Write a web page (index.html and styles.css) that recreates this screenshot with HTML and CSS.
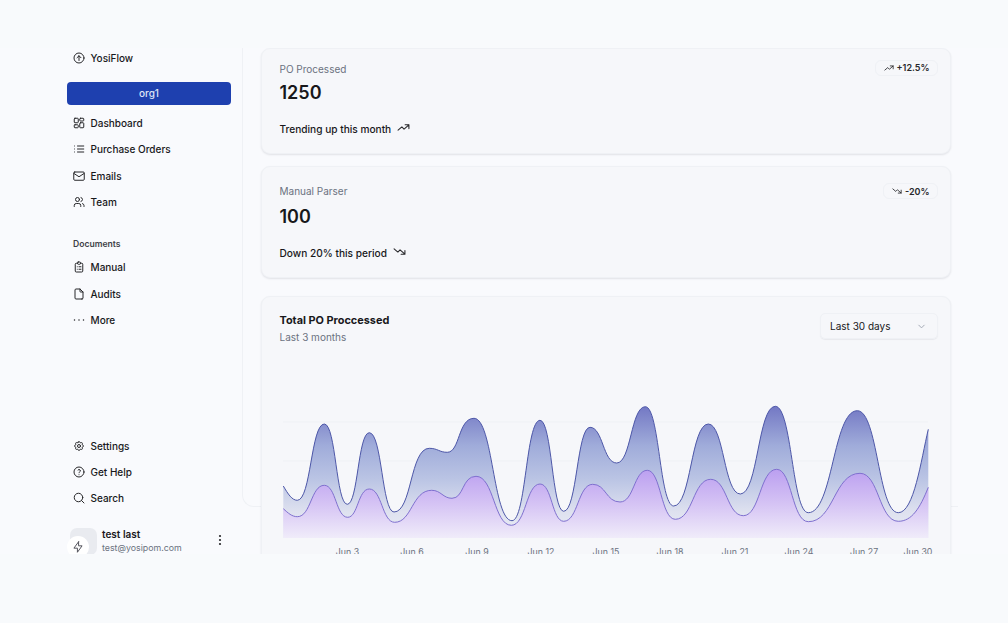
FILE: index.html
```html
<!DOCTYPE html>
<html lang="en">
<head>
<meta charset="utf-8">
<title>YosiFlow</title>
<link rel="stylesheet" href="styles.css">
</head>
<body>
<div class="shell">
  <aside class="sidebar">
    <div class="brand">
      <svg class="icon" viewBox="0 0 24 24"><circle cx="12" cy="12" r="10"/><path d="M12 17V7.5M8 11.5l4-4 4 4"/></svg>
      <span>YosiFlow</span>
    </div>
    <button class="org">org1</button>
    <nav class="nav nav-main">
      <a class="item"><svg class="icon" viewBox="0 0 24 24"><rect x="2.5" y="2.5" width="8" height="9" rx="1.5"/><rect x="13.5" y="2.5" width="8" height="5.5" rx="1.5"/><rect x="2.5" y="15.5" width="8" height="6" rx="1.5"/><rect x="13.5" y="11.5" width="8" height="10" rx="1.5"/></svg><span>Dashboard</span></a>
      <a class="item"><svg class="icon" viewBox="0 0 24 24"><path d="M9 6h12.5M9 12h12.5M9 18h12.5M3 6v.01M3 12v.01M3 18v.01"/></svg><span>Purchase Orders</span></a>
      <a class="item"><svg class="icon" viewBox="0 0 24 24"><rect x="1.5" y="4" width="21" height="16.5" rx="2"/><path d="M2 7l10 6.5L22 7"/></svg><span>Emails</span></a>
      <a class="item"><svg class="icon" viewBox="0 0 24 24"><circle cx="9" cy="7" r="4"/><path d="M2.5 21v-2a4 4 0 0 1 4-4h5a4 4 0 0 1 4 4v2M16 3.13a4 4 0 0 1 0 7.75M22 21v-2a4 4 0 0 0-3-3.85"/></svg><span>Team</span></a>
    </nav>
    <div class="group-label">Documents</div>
    <nav class="nav">
      <a class="item"><svg class="icon" viewBox="0 0 24 24"><path d="M9 4.500H6.500a2 2 0 0 0-2 2V20a2 2 0 0 0 2 2h11a2 2 0 0 0 2-2V6.500a2 2 0 0 0-2-2H15"/><rect x="9" y="2" width="6" height="4.500" rx="1.500"/><path d="M8.500 11.500h.01M12 11.500h4M8.500 16.500h.01M12 16.500h4"/></svg><span>Manual</span></a>
      <a class="item"><svg class="icon" viewBox="0 0 24 24"><path d="M14 2v5a1 1 0 0 0 1 1h5"/><path d="M18 22H6a2 2 0 0 1-2-2V4a2 2 0 0 1 2-2h8l6 6v12a2 2 0 0 1-2 2z"/></svg><span>Audits</span></a>
      <a class="item"><svg class="icon icon-bold" viewBox="0 0 24 24"><path d="M3 12h.01M12 12h.01M21 12h.01"/></svg><span>More</span></a>
    </nav>
    <nav class="nav nav-bottom">
      <a class="item"><svg class="icon" viewBox="0 0 24 24"><path d="M10.325 4.317c.426-1.756 2.924-1.756 3.35 0a1.724 1.724 0 0 0 2.573 1.066c1.543-.94 3.31.826 2.37 2.37a1.724 1.724 0 0 0 1.065 2.572c1.756.426 1.756 2.924 0 3.35a1.724 1.724 0 0 0-1.066 2.573c.94 1.543-.826 3.31-2.37 2.37a1.724 1.724 0 0 0-2.572 1.065c-.426 1.756-2.924 1.756-3.35 0a1.724 1.724 0 0 0-2.573-1.066c-1.543.94-3.31-.826-2.37-2.37a1.724 1.724 0 0 0-1.065-2.572c-1.756-.426-1.756-2.924 0-3.35a1.724 1.724 0 0 0 1.066-2.573c-.94-1.543.826-3.31 2.37-2.37 1 .608 2.296.07 2.572-1.065z"/><circle cx="12" cy="12" r="3"/></svg><span>Settings</span></a>
      <a class="item"><svg class="icon" viewBox="0 0 24 24"><circle cx="12" cy="12" r="10"/><path d="M12 17.500v.01M12 13.500a1.500 1.500 0 0 1 1-1.500 2.600 2.600 0 1 0-3-4"/></svg><span>Get Help</span></a>
      <a class="item"><svg class="icon" viewBox="0 0 24 24"><circle cx="11" cy="11" r="8.500"/><path d="M22 22l-5-5"/></svg><span>Search</span></a>
    </nav>
    <div class="user">
      <div class="avatar"></div>
      <div class="bolt"><svg viewBox="0 0 24 24"><path d="M13 3v7h6l-8 11v-7H5l8-11"/></svg></div>
      <div class="user-text">
        <div class="user-name">test last</div>
        <div class="user-mail">test@yosipom.com</div>
      </div>
      <svg class="kebab" viewBox="0 0 4 12"><circle cx="2" cy="2" r="1.100"/><circle cx="2" cy="6" r="1.100"/><circle cx="2" cy="10" r="1.100"/></svg>
    </div>
  </aside>
  <main class="main">
    <div class="panel">
      <section class="card card-stat card-first">
        <div class="stat-head">
          <div>
            <div class="stat-label">PO Processed</div>
            <div class="stat-value">1250</div>
          </div>
          <div class="badge"><svg class="mini" viewBox="0 0 24 24"><path d="M2 17l7-6 4 4 9-8M15 7h7v7"/></svg>+12.5%</div>
        </div>
        <div class="stat-foot">Trending up this month <svg class="foot-icon" viewBox="0 0 24 24"><path d="M2 17l7-6 4 4 9-8M15 7h7v7"/></svg></div>
      </section>
      <section class="card card-stat card-second">
        <div class="stat-head">
          <div>
            <div class="stat-label">Manual Parser</div>
            <div class="stat-value">100</div>
          </div>
          <div class="badge"><svg class="mini" viewBox="0 0 24 24"><path d="M2 7l7 6 4-4 9 8M22 10v7h-7"/></svg>-20%</div>
        </div>
        <div class="stat-foot">Down 20% this period <svg class="foot-icon" viewBox="0 0 24 24"><path d="M2 7l7 6 4-4 9 8M22 10v7h-7"/></svg></div>
      </section>
      <section class="card card-chart">
        <div class="chart-head">
          <div>
            <div class="chart-title">Total PO Proccessed</div>
            <div class="chart-sub">Last 3 months</div>
          </div>
          <div class="select">
            <span>Last 30 days</span>
            <svg class="chev" viewBox="0 0 24 24"><path d="M6 9l6 6 6-6"/></svg>
          </div>
        </div>
        <svg class="chart" viewBox="262 348 688 212" width="688" height="212">
          <defs>
            <linearGradient id="fillUpper" x1="0" y1="0" x2="0" y2="1">
              <stop offset="0" stop-color="#7378c4"/>
              <stop offset="0.3" stop-color="#a0acda"/>
              <stop offset="0.55" stop-color="#bac4e4"/>
              <stop offset="0.8" stop-color="#dee1ef"/>
              <stop offset="1" stop-color="#eceef7"/>
            </linearGradient>
            <linearGradient id="fillLower" x1="0" y1="0" x2="0" y2="1">
              <stop offset="0" stop-color="#bb9ff0"/>
              <stop offset="0.5" stop-color="#d5c3f4"/>
              <stop offset="1" stop-color="#f0ecfa"/>
            </linearGradient>
          </defs>
          <path class="grid" d="M283 422H928M283 461H928"/>
          <path class="area-upper" d="M283.3 486C288 494 292 500.3 297.3 500.3C311 500.3 311 424 324.3 424C336 424 336 504.3 347.3 504.3C358 504.3 358 432.7 369.3 432.7C382 432.7 382 512 394 512C412 512 410 448.3 429.3 448.3C438 448.3 439 452.3 447.3 452.3C460 452.3 458 418.3 474 418.3C493 418.3 493 520.7 512 520.7C526 520.7 526 420.3 540 420.3C552 420.3 552 511.3 563.7 511.3C577 511.3 577 427.3 590 427.3C603 427.3 603 463 616.7 463C631 463 631 406.7 645.3 406.7C659.5 406.7 659.5 506 673.7 506C691 506 691 424 708.3 424C724 424 724 494 740.3 494C758 494 758 406.3 775.3 406.3C792 406.3 792 512.7 808.3 512.7C833 512.7 833 410.7 857.3 410.7C878 410.7 878 512.7 898.3 512.7C914 512.7 921 460 928.3 429.3V538H283.3Z"/>
          <path class="area-lower" d="M283.3 508.7C288 513 292 516.7 297.3 516.7C311 516.7 311 485.3 324.3 485.3C336 485.3 336 517.3 347.7 517.3C358 517.3 358 489 369.3 489C382 489 382 522.3 394.7 522.3C412 522.3 412 490.3 431.7 490.3C441 490.3 443 498.3 452 498.3C464 498.3 462 476.3 476 476.3C494 476.3 494 525.3 511.3 525.3C526 525.3 526 484 540 484C552 484 552 521.3 563.7 521.3C578 521.3 578 484.3 592.7 484.3C606 484.3 606 502 620 502C634 502 634 470.3 647.3 470.3C661 470.3 661 519.3 675.3 519.3C693 519.3 693 479.3 710.7 479.3C727 479.3 727 515.7 743.3 515.7C760 515.7 760 469.3 776.7 469.3C792 469.3 792 521.7 808.3 521.7C834 521.7 834 473.3 860 473.3C879 473.3 879 521.3 898.3 521.3C912 521.3 920 508 928.3 487.3V538H283.3Z"/>
          <path class="line-upper" d="M283.3 486C288 494 292 500.3 297.3 500.3C311 500.3 311 424 324.3 424C336 424 336 504.3 347.3 504.3C358 504.3 358 432.7 369.3 432.7C382 432.7 382 512 394 512C412 512 410 448.3 429.3 448.3C438 448.3 439 452.3 447.3 452.3C460 452.3 458 418.3 474 418.3C493 418.3 493 520.7 512 520.7C526 520.7 526 420.3 540 420.3C552 420.3 552 511.3 563.7 511.3C577 511.3 577 427.3 590 427.3C603 427.3 603 463 616.7 463C631 463 631 406.7 645.3 406.7C659.5 406.7 659.5 506 673.7 506C691 506 691 424 708.3 424C724 424 724 494 740.3 494C758 494 758 406.3 775.3 406.3C792 406.3 792 512.7 808.3 512.7C833 512.7 833 410.7 857.3 410.7C878 410.7 878 512.7 898.3 512.7C914 512.7 921 460 928.3 429.3"/>
          <path class="line-lower" d="M283.3 508.7C288 513 292 516.7 297.3 516.7C311 516.7 311 485.3 324.3 485.3C336 485.3 336 517.3 347.7 517.3C358 517.3 358 489 369.3 489C382 489 382 522.3 394.7 522.3C412 522.3 412 490.3 431.7 490.3C441 490.3 443 498.3 452 498.3C464 498.3 462 476.3 476 476.3C494 476.3 494 525.3 511.3 525.3C526 525.3 526 484 540 484C552 484 552 521.3 563.7 521.3C578 521.3 578 484.3 592.7 484.3C606 484.3 606 502 620 502C634 502 634 470.3 647.3 470.3C661 470.3 661 519.3 675.3 519.3C693 519.3 693 479.3 710.7 479.3C727 479.3 727 515.7 743.3 515.7C760 515.7 760 469.3 776.7 469.3C792 469.3 792 521.7 808.3 521.7C834 521.7 834 473.3 860 473.3C879 473.3 879 521.3 898.3 521.3C912 521.3 920 508 928.3 487.3"/>
          <g class="ticks">
            <text x="347.5" y="555">Jun 3</text>
            <text x="412" y="555">Jun 6</text>
            <text x="477" y="555">Jun 9</text>
            <text x="541" y="555">Jun 12</text>
            <text x="606" y="555">Jun 15</text>
            <text x="670" y="555">Jun 18</text>
            <text x="735" y="555">Jun 21</text>
            <text x="799" y="555">Jun 24</text>
            <text x="864" y="555">Jun 27</text>
            <text x="918" y="555">Jun 30</text>
          </g>
        </svg>
      </section>
    </div>
  </main>
</div>
</body>
</html>
```

FILE: styles.css
```css
* { box-sizing: border-box; }

html, body { margin: 0; height: 100%; }

body {
  background: #f8fafc;
  padding-top: 48px;
  font-family: Inter, "Liberation Sans", sans-serif;
  font-size: 10px;
  color: #18181b;
  overflow: hidden;
}

.shell {
  display: flex;
  height: 506px;
  overflow: hidden;
  background: #f9fafd;
}

.sidebar {
  width: 242px;
  flex: none;
  display: flex;
  flex-direction: column;
  padding-left: 67px;
  padding-right: 11px;
}

.icon {
  width: 12px;
  height: 12px;
  flex: none;
  fill: none;
  stroke: #27272a;
  stroke-width: 2;
  stroke-linecap: round;
  stroke-linejoin: round;
}

.icon-bold { stroke-width: 3; }

.brand, .item {
  display: flex;
  align-items: center;
  gap: 5.5px;
  padding-left: 6px;
}

.brand { height: 20px; font-weight: 500; }

.org {
  margin-top: 14px;
  height: 22.5px;
  border: 0;
  border-radius: 4px;
  background: #1e40af;
  color: #dfe5f6;
  font: 500 10px Inter, "Liberation Sans", sans-serif;
}

.nav { display: flex; flex-direction: column; }
.nav-main { margin-top: 5.2px; }
.nav-bottom { margin-top: auto; }

.item { height: 26.4px; font-weight: 500; }

.group-label {
  margin-top: 18.9px;
  height: 20px;
  line-height: 20px;
  padding-left: 6px;
  font-size: 8.6px;
  font-weight: 600;
  color: #3f3f46;
}

.user {
  position: relative;
  margin-top: 16.5px;
  height: 26px;
  display: flex;
  align-items: flex-start;
  margin-left: 3px;
}

.avatar {
  width: 27px;
  height: 27px;
  flex: none;
  border-radius: 7px;
  background: #e9ebf0;
}

.bolt {
  position: absolute;
  left: -3px;
  top: 8px;
  width: 22px;
  height: 22px;
  border-radius: 50%;
  background: #ffffff;
  display: flex;
  align-items: center;
  justify-content: center;
}

.bolt svg {
  width: 14px;
  height: 14px;
  fill: none;
  stroke: #52525b;
  stroke-width: 1.7;
  stroke-linejoin: round;
  stroke-linecap: round;
}

.user-text { margin-left: 5px; flex: 1; }
.user-name { font-weight: 600; font-size: 10px; line-height: 13px; }
.user-mail { font-size: 8.8px; line-height: 13px; color: #6b7280; }

.kebab {
  width: 4px;
  height: 12px;
  margin-top: 6px;
  margin-right: 9px;
  fill: #27272a;
}

.main { flex: 1; min-width: 0; }

.panel {
  width: 716px;
  height: 459px;
  padding-left: 18px;
  border-left: 1px solid #eff1f5;
  border-bottom: 1px solid #eff1f5;
  border-bottom-left-radius: 12px;
}

.card {
  width: 690px;
  background: #f6f7fa;
  border: 1px solid #eff1f5;
  border-radius: 9px;
  box-shadow: 0 1px 2px rgba(24, 24, 40, 0.1);
}

.card-stat { padding: 17px 12px 17px 17.5px; }
.card-first { height: 106px; padding-top: 12.5px; }
.card-second { height: 112px; margin-top: 12px; }

.stat-head {
  display: flex;
  justify-content: space-between;
  align-items: flex-start;
}

.stat-label { line-height: 14px; color: #6b7280; }

.stat-value {
  font-size: 18px;
  font-weight: 600;
  line-height: 24px;
}

.card-first .stat-value { margin-top: 5px; }
.card-second .stat-value { margin-top: 6.5px; }
.card-first .badge { margin-top: -2px; }
.card-second .badge { margin-top: -1px; }

.badge {
  display: flex;
  align-items: center;
  gap: 2.5px;
  height: 16px;
  padding: 0 7.5px 0 8px;
  border: 1px solid #eff1f5;
  border-radius: 6px;
  font-size: 9px;
  font-weight: 600;
  color: #27272a;
}

.mini, .foot-icon {
  fill: none;
  stroke: #27272a;
  stroke-width: 2;
  stroke-linecap: round;
  stroke-linejoin: round;
}

.mini { width: 10px; height: 10px; }

.stat-foot {
  display: flex;
  align-items: center;
  gap: 3px;
  margin-top: 17px;
  font-size: 10.15px;
  line-height: 14px;
  font-weight: 500;
}

.foot-icon { width: 13px; height: 13px; margin-left: 3px; margin-top: -2px; }

.card-chart { margin-top: 18px; height: 300px; }

.chart-head {
  display: flex;
  justify-content: space-between;
  align-items: flex-start;
  height: 51px;
  padding: 15px 12px 0 17.5px;
}

.chart-title { font-size: 10.9px; font-weight: 700; line-height: 16px; }
.chart-sub { margin-top: 2px; line-height: 14px; color: #6b7280; }

.select {
  display: flex;
  align-items: center;
  justify-content: space-between;
  width: 118px;
  height: 26px;
  margin-top: 1px;
  padding: 0 10px 0 9px;
  border: 1px solid #eff1f5;
  border-radius: 5px;
  box-shadow: 0 1px 1px rgba(24, 24, 40, 0.06);
}

.chev {
  width: 11px;
  height: 11px;
  fill: none;
  stroke: #9ca3af;
  stroke-width: 2;
  stroke-linecap: round;
  stroke-linejoin: round;
}

.chart { display: block; }

.grid { fill: none; stroke: #eff1f5; stroke-width: 1; }
.area-upper { fill: url(#fillUpper); }
.area-lower { fill: url(#fillLower); }
.line-upper { fill: none; stroke: #4d57a8; stroke-width: 1; }
.line-lower { fill: none; stroke: #7f70cf; stroke-width: 1; }

.ticks text {
  font-size: 8.8px;
  fill: #6b7280;
  text-anchor: middle;
}
```
